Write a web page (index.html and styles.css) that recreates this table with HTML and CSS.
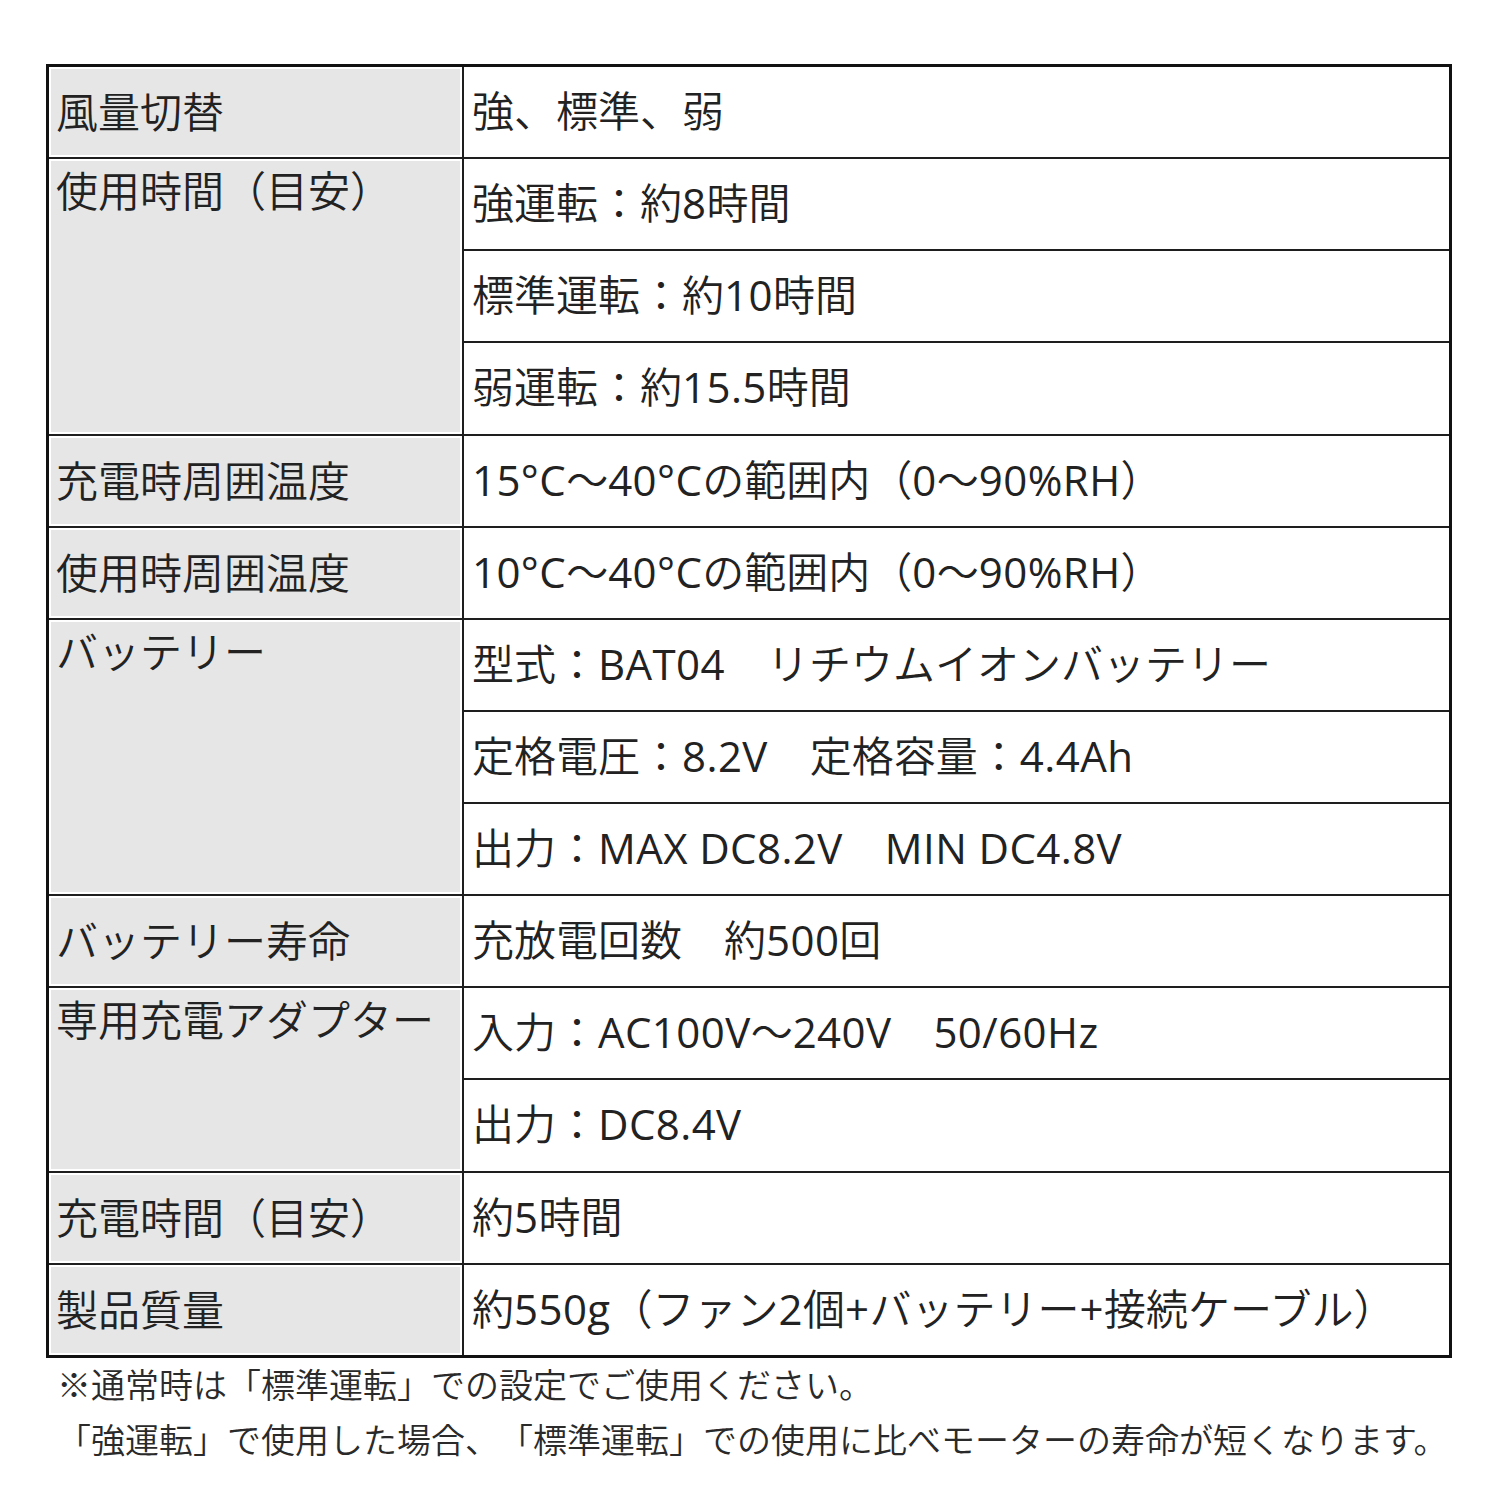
FILE: index.html
```html
<!DOCTYPE html>
<html lang="ja">
<head>
<meta charset="utf-8">
<title>仕様</title>
<link rel="stylesheet" href="styles.css">
</head>
<body>
<main class="page">
  <div class="spec">
    <div class="th">風量切替</div>
    <div class="td">強、標準、弱</div>

    <div class="th span3">使用時間（目安）</div>
    <div class="td">強運転：約<span class="en">8</span>時間</div>
    <div class="td">標準運転：約<span class="en">10</span>時間</div>
    <div class="td">弱運転：約<span class="en">15.5</span>時間</div>

    <div class="th">充電時周囲温度</div>
    <div class="td"><span class="en">15°C</span>～<span class="en">40°C</span>の範囲内（<span class="en">0</span>～<span class="en">90%RH</span>）</div>

    <div class="th">使用時周囲温度</div>
    <div class="td"><span class="en">10°C</span>～<span class="en">40°C</span>の範囲内（<span class="en">0</span>～<span class="en">90%RH</span>）</div>

    <div class="th span3">バッテリー</div>
    <div class="td">型式：<span class="en">BAT04</span>　リチウムイオンバッテリー</div>
    <div class="td">定格電圧：<span class="en">8.2V</span>　定格容量：<span class="en">4.4Ah</span></div>
    <div class="td">出力：<span class="en">MAX DC8.2V</span>　<span class="en">MIN DC4.8V</span></div>

    <div class="th">バッテリー寿命</div>
    <div class="td">充放電回数　約<span class="en">500</span>回</div>

    <div class="th span2">専用充電アダプター</div>
    <div class="td">入力：<span class="en">AC100V</span>～<span class="en">240V</span>　<span class="en">50/60Hz</span></div>
    <div class="td">出力：<span class="en">DC8.4V</span></div>

    <div class="th">充電時間（目安）</div>
    <div class="td">約<span class="en">5</span>時間</div>

    <div class="th">製品質量</div>
    <div class="td">約<span class="en">550g</span>（ファン<span class="en">2</span>個<span class="en">+</span>バッテリー<span class="en">+</span>接続ケーブル）</div>
  </div>
  <div class="notes">
    <p>※通常時は「標準運転」での設定でご使用ください。</p>
    <p>「強運転」で使用した場合、「標準運転」での使用に比べモーターの寿命が短くなります。</p>
  </div>
</main>
</body>
</html>
```

FILE: styles.css
```css
html, body {
  margin: 0;
  padding: 0;
  background: #ffffff;
}

body {
  font-family: "Open Sans", "Noto Sans CJK JP", "Noto Sans", sans-serif;
  color: #222222;
  text-spacing-trim: space-all;
}

.page {
  padding: 64px 0 0 46px;
  width: 1406px;
}

.spec {
  display: grid;
  grid-template-columns: 413px 985px;
  grid-auto-rows: 90.14px;
  gap: 2px;
  background: #1e1e1e;
  border: 3px solid #111111;
}

.th,
.td {
  font-size: 42px;
  font-weight: 350;
  line-height: 52px;
  white-space: nowrap;
}

.th {
  grid-column: 1;
  display: flex;
  align-items: center;
  background: #e6e6e6;
  box-shadow: inset 0 0 0 2px #ffffff;
  padding-left: 7px;
}

.td {
  grid-column: 2;
  background: #ffffff;
  padding: 18px 0 0 8px;
}

.en {
  font-weight: 400;
  letter-spacing: 0.01em;
}

.span2,
.span3 {
  align-items: flex-start;
  padding-top: 6px;
}

.span2 {
  grid-row: span 2;
}

.span3 {
  grid-row: span 3;
}

.notes {
  padding-left: 11px;
}

.notes p {
  margin: 0;
  font-size: 34px;
  font-weight: 350;
  line-height: 55px;
  white-space: nowrap;
  color: #2a2a2a;
}
```
